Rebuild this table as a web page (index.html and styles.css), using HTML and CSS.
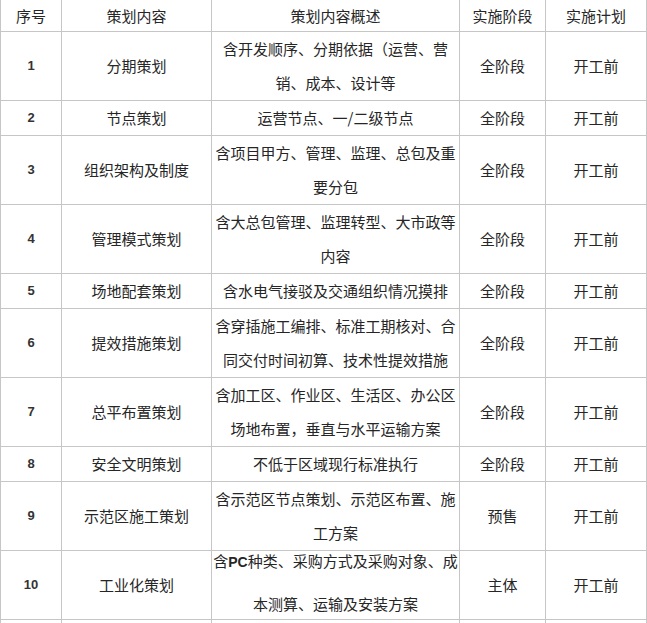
FILE: index.html
```html
<!DOCTYPE html>
<html lang="zh-CN">
<head>
<meta charset="utf-8">
<title>策划表</title>
<link rel="stylesheet" href="styles.css">
</head>
<body>
<table class="plan">
  <colgroup>
    <col class="c-no">
    <col class="c-name">
    <col class="c-desc">
    <col class="c-stage">
    <col class="c-plan">
  </colgroup>
  <thead>
    <tr>
      <th>序号</th>
      <th>策划内容</th>
      <th>策划内容概述</th>
      <th>实施阶段</th>
      <th>实施计划</th>
    </tr>
  </thead>
  <tbody>
    <tr>
      <td class="no">1</td>
      <td>分期策划</td>
      <td>含开发顺序、分期依据（运营、营销、成本、设计等</td>
      <td>全阶段</td>
      <td>开工前</td>
    </tr>
    <tr>
      <td class="no">2</td>
      <td>节点策划</td>
      <td>运营节点、一/二级节点</td>
      <td>全阶段</td>
      <td>开工前</td>
    </tr>
    <tr>
      <td class="no">3</td>
      <td>组织架构及制度</td>
      <td>含项目甲方、管理、监理、总包及重要分包</td>
      <td>全阶段</td>
      <td>开工前</td>
    </tr>
    <tr>
      <td class="no">4</td>
      <td>管理模式策划</td>
      <td>含大总包管理、监理转型、大市政等内容</td>
      <td>全阶段</td>
      <td>开工前</td>
    </tr>
    <tr>
      <td class="no">5</td>
      <td>场地配套策划</td>
      <td>含水电气接驳及交通组织情况摸排</td>
      <td>全阶段</td>
      <td>开工前</td>
    </tr>
    <tr>
      <td class="no">6</td>
      <td>提效措施策划</td>
      <td>含穿插施工编排、标准工期核对、合同交付时间初算、技术性提效措施</td>
      <td>全阶段</td>
      <td>开工前</td>
    </tr>
    <tr>
      <td class="no">7</td>
      <td>总平布置策划</td>
      <td>含加工区、作业区、生活区、办公区场地布置，垂直与水平运输方案</td>
      <td>全阶段</td>
      <td>开工前</td>
    </tr>
    <tr>
      <td class="no">8</td>
      <td>安全文明策划</td>
      <td>不低于区域现行标准执行</td>
      <td>全阶段</td>
      <td>开工前</td>
    </tr>
    <tr>
      <td class="no">9</td>
      <td>示范区施工策划</td>
      <td>含示范区节点策划、示范区布置、施工方案</td>
      <td>预售</td>
      <td>开工前</td>
    </tr>
    <tr>
      <td class="no">10</td>
      <td>工业化策划</td>
      <td class="wide"><div class="shift"><p class="shift-text">含<span class="latin">PC</span>种类、采购方式及采购对象、成本测算、运输及安装方案</p></div></td>
      <td>主体</td>
      <td>开工前</td>
    </tr>
    <tr class="more">
      <td class="no"></td>
      <td></td>
      <td></td>
      <td></td>
      <td></td>
    </tr>
  </tbody>
</table>
</body>
</html>
```

FILE: styles.css
```css
html, body {
  margin: 0;
  padding: 0;
  background: #ffffff;
}

body {
  font-family: "Noto Sans CJK SC", "Noto Sans", sans-serif;
  font-size: 15px;
  color: #262626;
}

.plan {
  border-collapse: collapse;
  table-layout: fixed;
  width: 646px;
  margin-top: -1px;
}

.c-no { width: 61px; }
.c-name { width: 150px; }
.c-desc { width: 248px; }
.c-stage { width: 86px; }
.c-plan { width: 101px; }

.plan th,
.plan td {
  border: 1px solid #c6c6c6;
  padding: 0 1px;
  text-align: center;
  vertical-align: middle;
  line-height: 34px;
  font-weight: normal;
}

.plan th {
  height: 31px;
  line-height: 31px;
}

.plan td.no {
  font-family: "Liberation Sans", Arial, sans-serif;
  font-size: 13px;
  font-weight: bold;
  color: #333333;
}

.plan td.wide {
  padding: 0;
}

.shift {
  height: 62px;
  padding-bottom: 6px;
  display: flex;
  flex-direction: column;
  justify-content: center;
}

.shift-text {
  margin: 0;
  line-height: 41px;
}

.latin {
  font-family: "Liberation Sans", Arial, sans-serif;
  font-weight: bold;
  font-size: 14px;
}

.more td {
  height: 34px;
}
```
